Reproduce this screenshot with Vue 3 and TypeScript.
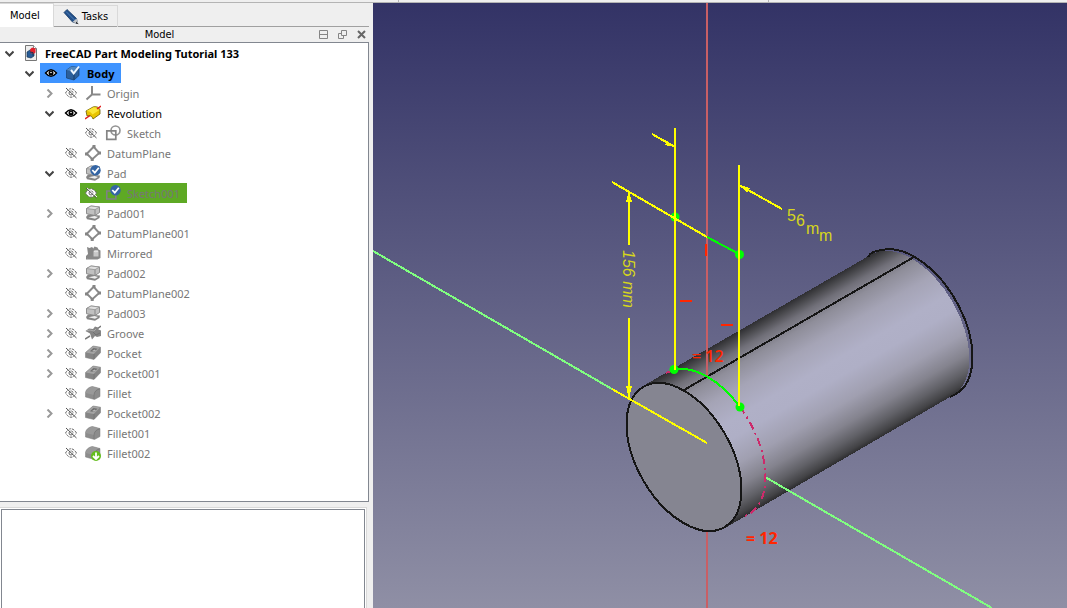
<script setup lang="ts">
import { computed, ref } from 'vue'

interface TreeItem {
  label: string
  level: number
  icon: string
  chevron?: 'open' | 'closed'
  eye?: 'shown' | 'hidden'
  state?: 'title' | 'active' | 'editing' | 'visible'
}

const items: TreeItem[] = [
  { label: 'FreeCAD Part Modeling Tutorial 133', level: 0, icon: 'document', chevron: 'open', state: 'title' },
  { label: 'Body', level: 1, icon: 'body', chevron: 'open', eye: 'shown', state: 'active' },
  { label: 'Origin', level: 2, icon: 'origin', chevron: 'closed', eye: 'hidden' },
  { label: 'Revolution', level: 2, icon: 'revolution', chevron: 'open', eye: 'shown', state: 'visible' },
  { label: 'Sketch', level: 3, icon: 'sketch', eye: 'hidden' },
  { label: 'DatumPlane', level: 2, icon: 'plane', eye: 'hidden' },
  { label: 'Pad', level: 2, icon: 'pad-check', chevron: 'open', eye: 'hidden' },
  { label: 'Sketch001', level: 3, icon: 'sketch-check', eye: 'hidden', state: 'editing' },
  { label: 'Pad001', level: 2, icon: 'pad', chevron: 'closed', eye: 'hidden' },
  { label: 'DatumPlane001', level: 2, icon: 'plane', eye: 'hidden' },
  { label: 'Mirrored', level: 2, icon: 'mirrored', eye: 'hidden' },
  { label: 'Pad002', level: 2, icon: 'pad', chevron: 'closed', eye: 'hidden' },
  { label: 'DatumPlane002', level: 2, icon: 'plane', eye: 'hidden' },
  { label: 'Pad003', level: 2, icon: 'pad', chevron: 'closed', eye: 'hidden' },
  { label: 'Groove', level: 2, icon: 'groove', chevron: 'closed', eye: 'hidden' },
  { label: 'Pocket', level: 2, icon: 'pocket', chevron: 'closed', eye: 'hidden' },
  { label: 'Pocket001', level: 2, icon: 'pocket', chevron: 'closed', eye: 'hidden' },
  { label: 'Fillet', level: 2, icon: 'fillet', eye: 'hidden' },
  { label: 'Pocket002', level: 2, icon: 'pocket', chevron: 'closed', eye: 'hidden' },
  { label: 'Fillet001', level: 2, icon: 'fillet', eye: 'hidden' },
  { label: 'Fillet002', level: 2, icon: 'fillet-tip', eye: 'hidden' },
]

const tab = ref<'model' | 'tasks'>('model')
const rows = computed(() => items.map((item) => ({ ...item, indent: `${item.level * 20}px` })))
</script>

<template>
  <div class="window">
    <svg class="defs" aria-hidden="true">
      <defs>
        <symbol id="document" viewBox="0 0 16 16">
          <path d="M2.500.5h8l3 3v12h-11z" fill="#eee" stroke="#777" />
          <path d="M10.500.5v3h3" fill="#fff" stroke="#888" />
          <path d="M4 7l3-2 4 1v5l-3 2-4-1z" fill="#285b96" stroke="#163757" stroke-width=".7" />
          <path d="M7 4.500l2-2 3.500 1v4l-2 1.500-3-1z" fill="#e4202c" />
          <path d="M7 7l3 .6v3" fill="none" stroke="#163757" />
        </symbol>
        <symbol id="body" viewBox="0 0 16 16">
          <path d="M1.500 5l5-3.500 7.500 1v8L9 15l-7.500-2z" fill="#2c5f9b" stroke="#173d6b" stroke-width=".7" />
          <path d="M1.500 5l7.500 1.700 5-4.200-7.500-1z" fill="#5288c0" />
          <path d="M9 6.700v8" stroke="#173d6b" />
          <path d="M6 5l2.700 3.300L14 1.500" fill="none" stroke="#eef6ff" stroke-width="2" />
        </symbol>
        <symbol id="origin" viewBox="0 0 16 16">
          <path d="M7 1v8.500h8.500M7 9.500L1.500 14.500" fill="none" stroke="#888" stroke-width="2" />
        </symbol>
        <symbol id="revolution" viewBox="0 0 16 16">
          <path d="M1 6l7-4c3-1 6 0 7 3v4l-7 5c-1-3-3-4-6-3z" fill="#e8c400" stroke="#6e5e00" stroke-width=".8" />
          <path d="M1.500 6l7-3.700c3 0 4 1 5.500 3L7.500 9.500C6 7 4 6 1.500 6z" fill="#fae637" />
          <path d="M0 14l5-3.500M12 4l4-3" stroke="#e02020" stroke-width="1.500" />
        </symbol>
        <symbol id="sketch" viewBox="0 0 16 16">
          <circle cx="10.500" cy="5.500" r="4.500" fill="none" stroke="#929292" stroke-width="1.600" />
          <path d="M1.800 5.800h9v8.500h-9z" fill="none" stroke="#858585" stroke-width="1.700" />
        </symbol>
        <symbol id="badge" viewBox="0 0 16 16">
          <circle cx="10.500" cy="5.200" r="5.200" fill="#3465a4" />
          <path d="M7.300 5l2.500 2.700 4-5" fill="none" stroke="#fff" stroke-width="1.800" />
        </symbol>
        <symbol id="sketch-check" viewBox="0 0 16 16">
          <path d="M1.800 6h9v8h-9z" fill="none" stroke="#807f86" stroke-width="1.600" />
          <use href="#badge" />
        </symbol>
        <symbol id="plane" viewBox="0 0 16 16">
          <path d="M8.700 1.800L14.200 8 7.300 14.200 1.800 8.700z" fill="#fff" stroke="#8a8a8a" stroke-width="2" />
          <path d="M7.500 0h3v3h-3zM13 6.500h3v3h-3zM5.700 13h3v3h-3zM0 7.500h3v3H0z" fill="#858585" />
        </symbol>
        <symbol id="pad" viewBox="0 0 16 16">
          <path d="M1 12l2-2.500 12 1-.5 2.500-4.500 2.800-8-1.600z" fill="#858585" />
          <path d="M3.500 12.300l6.500 1.400 3-1.700-3.500-1z" fill="#eee" />
          <path d="M1.500 3.500L6 1l8.500 1v5.500L10 10.500 1.500 8.700z" fill="#c0c0c0" stroke="#858585" stroke-width=".9" />
          <path d="M1.500 3.500L6 1l8.500 1L10 4.700z" fill="#e0e0e0" stroke="#929292" stroke-width=".8" />
          <path d="M10 4.700v5.800" stroke="#888" />
        </symbol>
        <symbol id="pad-check" viewBox="0 0 16 16">
          <use href="#pad" />
          <use href="#badge" />
        </symbol>
        <symbol id="mirrored" viewBox="0 0 16 16">
          <path d="M2 2l2.500 1L7 2l1 1v8l-7 3.500V11L3 9z" fill="#878787" />
          <path d="M7.500 4.500l2-3 3 1 1 2 2 1V13l-3 1.500H1L7 10z" fill="#898989" />
          <path d="M8.500 6.500c0-2 5-2 5 0v5h-5z" fill="#c8c8c8" />
          <path d="M9 6c1 1 2 1 4 0" fill="none" stroke="#eee" />
        </symbol>
        <symbol id="groove" viewBox="0 0 16 16">
          <path d="M0 14l5-3M12 4l4-3" stroke="#777" stroke-width="1.500" />
          <path d="M.5 6L4 3.500l4 .5 2-2.500 3 1 .5 2 2.500 1v5.500l-4 1-2-1-3 3.500-2-6z" fill="#858585" />
          <path d="M1 6l4-1 4 1 2-2" fill="none" stroke="#aaa" />
          <path d="M8 7l3 3 4-2" fill="none" stroke="#707070" />
        </symbol>
        <symbol id="pocket" viewBox="0 0 16 16">
          <path d="M.5 7.500L8 1l7.500 1.200v5.500L9 14.500.5 12.500z" fill="#858585" stroke="#777" stroke-width=".5" />
          <path d="M.8 7.500L8 1.300l7 1.200-6.300 6.500z" fill="#a4a4a4" />
          <path d="M5 6.300L8.500 3l4 .7-3.500 3.300z" fill="#6d6d6d" />
          <path d="M7 6l2.500-1.500 1.500.7-2 1.500z" fill="#b8b8b8" />
          <path d="M9 9v5" stroke="#777" />
        </symbol>
        <symbol id="fillet" viewBox="0 0 16 16">
          <path d="M.5 8c0-3 3-6 7-6.500l7.500 2v8L9.500 14.500.5 12z" fill="#8c8c8c" stroke="#7d7d7d" stroke-width=".5" />
          <path d="M.8 8C1 5 4 2 7.500 1.700l7.300 2C11 4 9 7 9 10z" fill="#999" />
          <path d="M9 14V10c0-3 2.500-5.500 5.800-6.200" fill="none" stroke="#777" stroke-width=".8" />
        </symbol>
        <symbol id="fillet-tip" viewBox="0 0 16 16">
          <use href="#fillet" />
          <circle cx="11" cy="11" r="5" fill="#63bd1c" />
          <path d="M11 7.500v6M8 11l3 3 3-3" fill="none" stroke="#fff" stroke-width="1.800" />
        </symbol>
        <symbol id="shown" viewBox="0 0 16 16">
          <path d="M2.500 8q5.500-6.500 11 0q-5.500 6.500-11 0z" fill="#fff" stroke="#000" stroke-width="1.400" />
          <circle cx="8" cy="8" r="2.500" />
          <circle cx="8" cy="7.500" r=".8" fill="#fff" />
        </symbol>
        <symbol id="hidden" viewBox="0 0 16 16">
          <path d="M2.500 8q5.500-8.500 11 0q-5.500 8.500-11 0z" fill="#fff" stroke="#666" stroke-dasharray="3 1" />
          <circle cx="8" cy="8" r="2" fill="none" stroke="#666" />
          <path d="M4 3l10 9" stroke="#fff" />
          <path d="M3 3l10.500 10" stroke="#555" />
        </symbol>
      </defs>
    </svg>

    <div class="topstrip"><span></span><span></span></div>

    <aside class="side">
      <div class="tabs" role="tablist">
        <button class="tab" :class="{ current: tab === 'model' }" role="tab" :aria-selected="tab === 'model'" @click="tab = 'model'">Model</button>
        <button class="tab" :class="{ current: tab === 'tasks' }" role="tab" :aria-selected="tab === 'tasks'" @click="tab = 'tasks'">
          <svg class="icon" viewBox="0 0 16 16" aria-hidden="true">
            <path d="M1 3.500L4 .5l9.500 9 1 5-5-1.500z" fill="#23518c" stroke="#173a64" stroke-width=".8" />
            <path d="M3 2.500l9 9" stroke="#5080b5" />
            <path d="M9.500 13l4-3.500L15.500 15z" fill="#c5c7c9" />
            <path d="M13 12.500l2.700 2.700-2.700-.6z" fill="#222" />
          </svg>
          Tasks
        </button>
      </div>

      <header class="dock">
        <h1>Model</h1>
        <div class="dock-buttons">
          <button aria-label="Collapse">
            <svg viewBox="0 0 9 9"><path d="M.5.5h8v8h-8zM.5 4.500h8" /></svg>
          </button>
          <button aria-label="Float">
            <svg viewBox="0 0 9 9"><path d="M3.500.5h5v5h-5zM3.500 3.500h-3v5h5v-3" /></svg>
          </button>
          <button aria-label="Close">
            <svg class="close" viewBox="0 0 9 9"><path d="M1 1l7 7M8 1L1 8" /></svg>
          </button>
        </div>
      </header>

      <ul class="tree" role="tree">
        <li v-for="row in rows" :key="row.label" class="row" role="treeitem" :aria-level="row.level + 1" :style="{ paddingLeft: row.indent }">
          <button v-if="row.chevron" class="chevron" :class="row.chevron" :aria-label="`Toggle ${row.label}`">
            <svg viewBox="0 0 9 9" aria-hidden="true">
              <path v-if="row.chevron === 'open'" d="M.5 2.500l4 4 4-4" />
              <path v-else d="M2.500.5l4 4-4 4" />
            </svg>
          </button>
          <span v-else class="chevron"></span>
          <span class="entry" :class="row.state">
            <button v-if="row.eye" class="eye" :aria-label="`Visibility of ${row.label}`">
              <svg class="icon" aria-hidden="true"><use :href="`#${row.eye}`" /></svg>
            </button>
            <svg class="icon" aria-hidden="true"><use :href="`#${row.icon}`" /></svg>
            <span class="label">{{ row.label }}</span>
          </span>
        </li>
      </ul>

      <section class="properties" aria-label="Properties"><div class="sheet"></div></section>
    </aside>

    <main class="view">
      <svg class="scene" viewBox="373 3 694 605" preserveAspectRatio="xMinYMin slice" role="img" aria-label="3D view">
        <defs>
          <linearGradient id="side" gradientUnits="userSpaceOnUse" x1="643" y1="386" x2="725" y2="528">
            <stop offset="0" stop-color="#2e2e31" />
            <stop offset=".04" stop-color="#48484c" />
            <stop offset=".1" stop-color="#706f78" />
            <stop offset=".18" stop-color="#8f8e9a" />
            <stop offset=".3" stop-color="#a5a4b6" />
            <stop offset=".45" stop-color="#b0b0c7" />
            <stop offset=".55" stop-color="#afafc6" />
            <stop offset=".7" stop-color="#a09fb0" />
            <stop offset=".82" stop-color="#84838e" />
            <stop offset=".91" stop-color="#606066" />
            <stop offset=".97" stop-color="#434346" />
            <stop offset="1" stop-color="#2b2b2d" />
          </linearGradient>
        </defs>

        <path class="x-axis" d="M707 3V608" />
        <path d="M643 386L874 253A81.500 47 60 0 1 955 394L725 528z" fill="url(#side)" />
        <path class="edge" d="M868 257Q871 251 882 250A81.500 47 60 0 1 956 394L950 397M684 390L914 257" />
        <ellipse class="face edge" cx="684" cy="457" rx="81" ry="47" transform="rotate(60 684 457)" />

        <path class="x-axis" d="M707 250V376" />
        <path class="y-axis" d="M373 251L612 389M765 477L992 608" />
        <path class="helper" d="M740 407A81.500 47 60 0 1 742 517M666 373l8-3" />
        <path class="curve" d="M707 237L739 254M674 370A81.500 47 60 0 1 740 407" />
        <g fill="#0f0">
          <circle cx="675" cy="217" r="4.500" />
          <circle cx="739.500" cy="254.500" r="4.500" />
          <circle cx="674" cy="369.500" r="4.500" />
          <circle cx="740" cy="407" r="4.500" />
        </g>
        <path class="dimension" d="M675 128V370M739 165V406M629 192V245M629 318V399M612 182L707 237M612 389L707 443M652 134L675 147M739 185L782 209" />
        <path d="M674 147l-9-2 2-4zM740 185l10 3-3 5zM629 191l3 11h-6zM629 399l-3-13h6z" fill="#ff0" />
        <path class="constraint" d="M680 301h12M721 325h12M706 244v12" />

        <text class="measure" x="787 796 803 806 819" y="221 226 229 234 241">56 mm</text>
        <text class="measure slant" transform="translate(623 250) rotate(90)">156 mm</text>
        <text class="equal light" x="692" y="362">= 12</text>
        <text class="equal" x="746" y="544">= 12</text>
      </svg>
    </main>
  </div>
</template>

<style>
body {
  margin: 0;
}
</style>

<style scoped>
.window {
  display: grid;
  grid-template: 3px minmax(0, 1fr) / 373px minmax(0, 1fr);
  height: 100vh;
  background: #efefef;
  color: #000;
  font: 11px/16px "Noto Sans", "Open Sans", sans-serif;
}
.defs {
  position: absolute;
  width: 0;
  height: 0;
}
.topstrip {
  display: flex;
  grid-column: 1 / -1;
  box-sizing: border-box;
  border-bottom: 1px solid #b4b4b4;
}
.topstrip span {
  box-sizing: border-box;
  width: 399px;
  border-right: 1px solid #b4b4b4;
}
.topstrip span + span {
  width: 370px;
}
button {
  padding: 0;
  border: 0;
  background: none;
  color: inherit;
  font: inherit;
}
.icon {
  display: block;
  flex: none;
  width: 16px;
  height: 16px;
}
.side {
  display: flex;
  flex-direction: column;
  min-height: 0;
}
.tabs {
  display: flex;
  align-items: flex-end;
  height: 24px;
  box-sizing: border-box;
  margin-right: 4px;
  box-shadow: inset 0 -1px #a0a0a0;
  font-family: "DejaVu Sans Condensed", "Noto Sans", sans-serif;
}
.tab {
  display: flex;
  align-items: center;
  gap: 3px;
  height: 22px;
  padding: 0 9px;
  border: solid #d9d9d9;
  border-width: 1px 1px 0 0;
}
.tab.current {
  height: 24px;
  padding: 0 13px 0 10px;
  background: #fff;
}
.dock {
  display: flex;
  align-items: center;
  height: 15px;
  margin-right: 4px;
}
.dock h1 {
  flex: 1;
  margin: 0;
  font: 11px/15px "DejaVu Sans Condensed", "Noto Sans", sans-serif;
  text-align: center;
}
.dock-buttons {
  display: flex;
  gap: 10px;
  padding-right: 3px;
}
.dock-buttons button {
  width: 9px;
  height: 9px;
}
.dock-buttons svg,
.chevron svg {
  display: block;
  width: 9px;
  height: 9px;
  fill: none;
  stroke: #858585;
}
.dock-buttons .close {
  stroke: #666;
  stroke-width: 2;
}
.tree {
  flex: 1;
  min-height: 0;
  margin: 0 4px 0 0;
  padding: 0;
  overflow: hidden;
  border: solid #828790;
  border-width: 1px 1px 1px 0;
  background: #fff;
  list-style: none;
}
.row {
  display: flex;
  height: 20px;
}
.chevron {
  display: grid;
  flex: none;
  place-items: center start;
  box-sizing: border-box;
  width: 20px;
  height: 20px;
  padding-left: 5px;
}
.chevron svg {
  stroke: #999;
  stroke-width: 2;
}
.chevron.open svg {
  stroke: #444;
}
.entry {
  display: flex;
  align-items: center;
  gap: 6px;
  padding: 0 7px 0 3px;
  color: #777;
  white-space: nowrap;
}
.label {
  padding-top: 1px;
}
.entry.title,
.entry.active {
  color: #000;
  font-weight: 700;
}
.entry.visible {
  color: #000;
}
.entry.active {
  background: #3f94ff;
}
.entry.editing {
  background: #5ea924;
}
.properties {
  flex: 0 0 101px;
  box-sizing: border-box;
  margin: 5px 6px 0 0;
  padding: 1px 1px 0;
  border: solid #d9d9d9;
  border-width: 1px 1px 0 0;
  background: #fff;
}
.sheet {
  height: 100%;
  box-sizing: border-box;
  border: solid #828790;
  border-width: 1px 1px 0;
}
.view {
  min-width: 0;
  min-height: 0;
  overflow: hidden;
  background: linear-gradient(#333366, #8f8fa5);
}
.scene {
  display: block;
  width: 100%;
  height: 100%;
}
.scene path,
.scene ellipse {
  shape-rendering: crispEdges;
}
.x-axis {
  stroke: #c85f65;
  stroke-width: 2;
}
.y-axis {
  stroke: #80ff80;
  stroke-width: 2;
}
.edge {
  fill: none;
  stroke: #161616;
  stroke-width: 2;
}
.face {
  fill: #858591;
}
.helper {
  fill: none;
  stroke: #cc2b6b;
  stroke-width: 2;
  stroke-dasharray: 8 4 2 4;
}
.curve {
  fill: none;
  stroke: #0f0;
  stroke-width: 2;
}
.dimension {
  fill: none;
  stroke: #ff0;
  stroke-width: 2;
}
.constraint {
  stroke: #ff2600;
  stroke-width: 2;
}
.measure {
  fill: #d6d61c;
  font: 16px "Liberation Sans", sans-serif;
}
.slant {
  font-style: italic;
}
.equal {
  fill: #ff2600;
  font: 700 16px "Open Sans", sans-serif;
}
.light {
  font-weight: 600;
}
</style>
